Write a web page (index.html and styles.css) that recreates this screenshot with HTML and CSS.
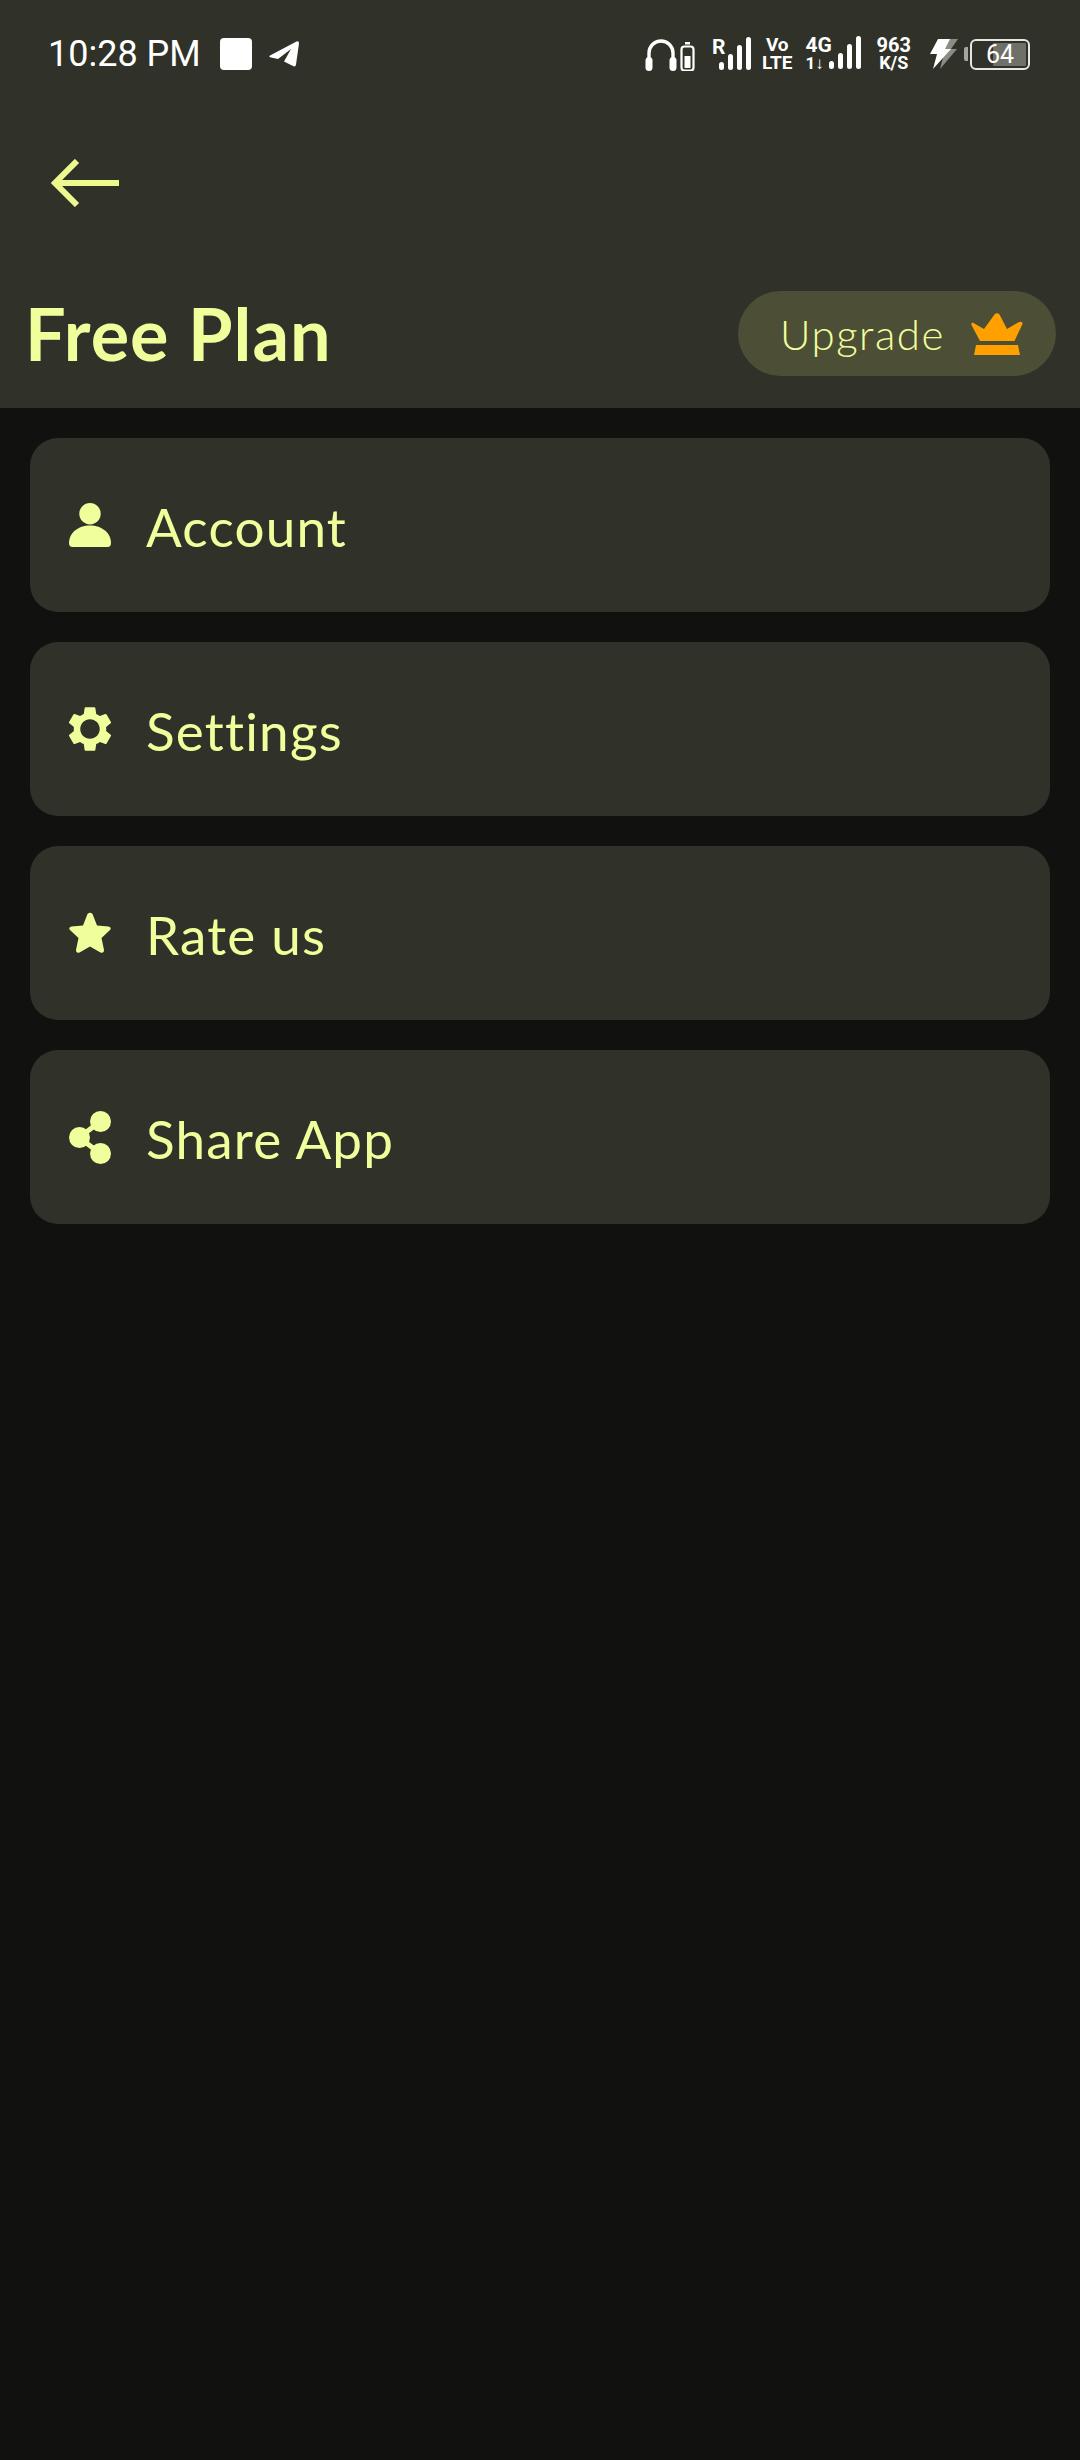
FILE: index.html
```html
<!DOCTYPE html>
<html lang="en">
<head>
  <meta charset="UTF-8">
  <meta name="viewport" content="width=device-width, initial-scale=1.0">
  <title>Free Plan</title>
  <link rel="stylesheet" href="styles.css">
</head>
<body>

  <header class="top">
    <div class="status">
      <div class="status-left">
        <span class="time">10:28 PM</span>
        <span class="notif-square"></span>
        <svg class="notif-plane" viewBox="0 0 30 26"><path d="M1 14.500 27.500 .6Q30-.4 30 2.500L27 23.500Q26.500 26.300 24 25L15 20.500 22 8 9 18 2 16.500Q-.8 15.700 1 14.500Z" fill="#fff"/></svg>
      </div>
      <div class="status-right">
        <svg class="ic-phones" viewBox="0 0 50 34"><path d="M4 24V16a12 12 0 0 1 24 0V24" fill="none" stroke="#fff" stroke-width="3.400"/><rect x="0.500" y="20" width="7" height="14" rx="3.500" fill="#fff"/><rect x="24.500" y="20" width="7" height="14" rx="3.500" fill="#fff"/><rect x="40" y="5" width="5" height="2.500" fill="#fff"/><rect x="36.500" y="9.500" width="12" height="24" rx="3" fill="none" stroke="#fff" stroke-width="2.200"/><rect x="39.500" y="19" width="6" height="12" fill="#fff"/></svg>
        <div class="sig sig-roam"><span class="sig-tag">R</span><svg class="bars" viewBox="0 0 32 34"><rect x="0" y="25" width="5" height="8" rx="2.500"/><rect x="9" y="17" width="5" height="16" rx="2.500"/><rect x="18" y="8" width="5" height="25" rx="2.500"/><rect x="27" y="0" width="5" height="33" rx="2.500"/></svg></div>
        <div class="stack stack-volte"><span>Vo</span><span>LTE</span></div>
        <div class="sig sig-data"><div class="stack stack-4g"><span>4G</span><span class="updown">1↓</span></div><svg class="bars" viewBox="0 0 32 34"><rect x="0" y="25" width="5" height="8" rx="2.500"/><rect x="9" y="17" width="5" height="16" rx="2.500"/><rect x="18" y="8" width="5" height="25" rx="2.500"/><rect x="27" y="0" width="5" height="33" rx="2.500"/></svg></div>
        <div class="stack stack-speed"><span>963</span><span class="unit">K/S</span></div>
        <svg class="ic-bolt" viewBox="0 0 28 30"><path d="M14 0H28L21 10H27L10 30 14 15H8Z" fill="#8b8c82"/><path d="M8 0H20L15 10H21L3 30 7 15H0Z" fill="#fff"/></svg>
        <div class="battery">
          <span class="battery-nub"></span>
          <div class="battery-body"><span class="battery-fill"></span><span class="battery-num">64</span></div>
        </div>
      </div>
    </div>

    <div class="toolbar">
      <svg class="back" viewBox="0 0 68 48"><path d="M26 2 4 24 26 46M4 24H68" fill="none" stroke="#eef98d" stroke-width="6"/></svg>
    </div>

    <div class="title-row">
      <h1 class="plan">Free Plan</h1>
      <div class="upgrade">
        <span>Upgrade</span>
        <svg class="crown" viewBox="0 0 52 42"><path d="M1.500 9.500 13 16 23.500 1.500Q26-.8 28.500 1.500L36 16 48 9Q52 8 51.500 11L43.500 28H9L.5 12Q0 10 1.500 9.500Z" fill="#ffa000"/><path d="M5 32H47L49 42H3Z" fill="#ffa000"/></svg>
      </div>
    </div>
  </header>

  <main class="menu">
    <div class="row">
      <svg class="row-icon" viewBox="0 0 42 44"><circle cx="21" cy="10.700" r="10.700"/><path d="M0 40C0 30 9 22.500 21 22.500S42 30 42 40Q42 44 38.500 44H3.500Q0 44 0 40Z"/></svg>
      <span class="row-label">Account</span>
    </div>
    <div class="row">
      <svg class="row-icon" viewBox="2.300 2 19.400 20"><path d="M19.430 12.980c.04-.32.07-.64.07-.98s-.03-.66-.07-.98l2.110-1.650c.19-.15.24-.42.120-.64l-2-3.460c-.12-.22-.39-.3-.61-.22l-2.490 1c-.52-.4-1.080-.73-1.690-.98l-.38-2.650C14.460 2.180 14.250 2 14 2h-4c-.25 0-.46.18-.49.42l-.38 2.650c-.61.25-1.170.59-1.690.98l-2.490-1c-.23-.09-.49 0-.61.22l-2 3.460c-.13.22-.07.49.12.64l2.110 1.650c-.04.32-.07.65-.07.98s.03.66.07.98l-2.110 1.650c-.19.15-.24.42-.12.64l2 3.460c.12.22.39.3.61.22l2.490-1c.52.4 1.080.73 1.690.98l.38 2.650c.03.24.24.42.49.42h4c.25 0 .46-.18.49-.42l.38-2.650c.61-.25 1.170-.59 1.690-.98l2.490 1c.23.09.49 0 .61-.22l2-3.460c.12-.22.07-.49-.12-.64l-2.110-1.650zM12 16.500c-2.480 0-4.500-2.020-4.500-4.500s2.020-4.500 4.500-4.500 4.500 2.020 4.500 4.500-2.020 4.500-4.500 4.500z"/></svg>
      <span class="row-label">Settings</span>
    </div>
    <div class="row">
      <svg class="row-icon" viewBox="0 0 42 41"><path d="M18.500 1.500Q21-1 23.500 1.500L28 13 39.500 14Q43 15 41 17.500L32.500 25.500 35 37.500Q35 41 31.500 40L21 34 10.500 40Q7 41 7 37.500L9.500 25.500 1 17.500Q-1 15 2.500 14L14 13Z"/></svg>
      <span class="row-label">Rate us</span>
    </div>
    <div class="row">
      <svg class="row-icon row-icon-share" viewBox="0 0 42 53"><path d="M32 10 10 26.500 32 43" fill="none" stroke="#f0ff9c" stroke-width="5"/><circle cx="31.500" cy="10.500" r="10.500"/><circle cx="10.500" cy="26.500" r="10.500"/><circle cx="31.500" cy="42.500" r="10.500"/></svg>
      <span class="row-label">Share App</span>
    </div>
  </main>

</body>
</html>
```

FILE: styles.css
```css
* {
  box-sizing: border-box;
}
html, body {
  margin: 0;
  padding: 0;
}
body {
  width: 1080px;
  height: 2460px;
  overflow: hidden;
  background-color: #111210;
  color: #f0ff9c;
  font-family: "Lato", "Liberation Sans", sans-serif;
}

.top {
  height: 408px;
  background-color: #303128;
  display: flex;
  flex-direction: column;
}

.status {
  height: 108px;
  padding: 0 50px 0 48px;
  display: flex;
  justify-content: space-between;
  align-items: center;
  color: #fff;
}
.status-left {
  display: flex;
  align-items: center;
}
.time {
  font-family: "Roboto", sans-serif;
  font-size: 36px;
  width: 172px;
}
.notif-square {
  width: 32px;
  height: 32px;
  border-radius: 4px;
  background-color: #fff;
  margin-right: 17px;
}
.notif-plane {
  width: 30px;
  height: 26px;
}
.status-right {
  display: flex;
  align-items: center;
}
.ic-phones {
  width: 50px;
  height: 34px;
}
.sig {
  display: flex;
  align-items: flex-start;
}
.sig-roam {
  margin-left: 17px;
}
.sig-data {
  margin-left: 13px;
}
.sig-tag {
  font: 700 21px/20px "Roboto", sans-serif;
  width: 14px;
  margin-right: -7px;
}
.bars {
  width: 32px;
  height: 34px;
  fill: #fff;
}
.stack {
  display: flex;
  flex-direction: column;
  align-items: center;
  font: 700 19px/18px "Roboto", sans-serif;
}
.stack-volte {
  margin-left: 11px;
}
.stack-4g {
  width: 25px;
  margin-right: -2px;
  align-items: flex-start;
  font-size: 21px;
}
.updown {
  font-size: 17px;
}
.stack-speed {
  margin-left: 16px;
  font-size: 20px;
}
.unit {
  font-size: 18px;
}
.ic-bolt {
  width: 28px;
  height: 30px;
  margin-left: 19px;
}
.battery {
  display: flex;
  align-items: center;
  gap: 2px;
  margin-left: 6px;
}
.battery-nub {
  width: 4px;
  height: 14px;
  background-color: #a6a69f;
  border-radius: 2px 0 0 2px;
}
.battery-body {
  position: relative;
  width: 60px;
  height: 31px;
  border: 2px solid #e6e6e2;
  border-radius: 6px;
  display: flex;
  align-items: center;
  justify-content: center;
}
.battery-fill {
  position: absolute;
  right: 2px;
  top: 2px;
  bottom: 2px;
  width: 33px;
  background-color: #6f7068;
  border-radius: 1px;
}
.battery-num {
  position: relative;
  font: 400 25px "Roboto", sans-serif;
  color: #fff;
}

.toolbar {
  height: 150px;
  padding: 0 0 75px 51px;
  display: flex;
  align-items: flex-end;
}
.toolbar .back {
  width: 68px;
  height: 48px;
  margin-bottom: -24px;
}

.title-row {
  display: flex;
  justify-content: space-between;
  align-items: center;
  padding: 33px 24px 32px 25px;
}
.plan {
  margin: 0;
  font-size: 72px;
  font-weight: 700;
  line-height: 85px;
  letter-spacing: 1px;
}
.upgrade {
  width: 318px;
  height: 85px;
  border-radius: 43px;
  background-color: #4c4f36;
  padding: 0 33px 0 42px;
  display: flex;
  align-items: center;
  justify-content: space-between;
  font-size: 42px;
  font-weight: 300;
  letter-spacing: 1.500px;
}
.crown {
  width: 52px;
  height: 42px;
}

.menu {
  padding: 30px 30px;
  display: flex;
  flex-direction: column;
  gap: 30px;
}
.row {
  height: 174px;
  border-radius: 28px;
  background-color: #303128;
  padding-left: 39px;
  display: flex;
  align-items: center;
  gap: 35px;
  font-size: 53px;
  letter-spacing: 1.200px;
}
.row-label {
  padding-top: 3px;
}
.row-icon {
  width: 42px;
  height: 44px;
  fill: #f0ff9c;
}
.row-icon-share {
  height: 53px;
}
```
